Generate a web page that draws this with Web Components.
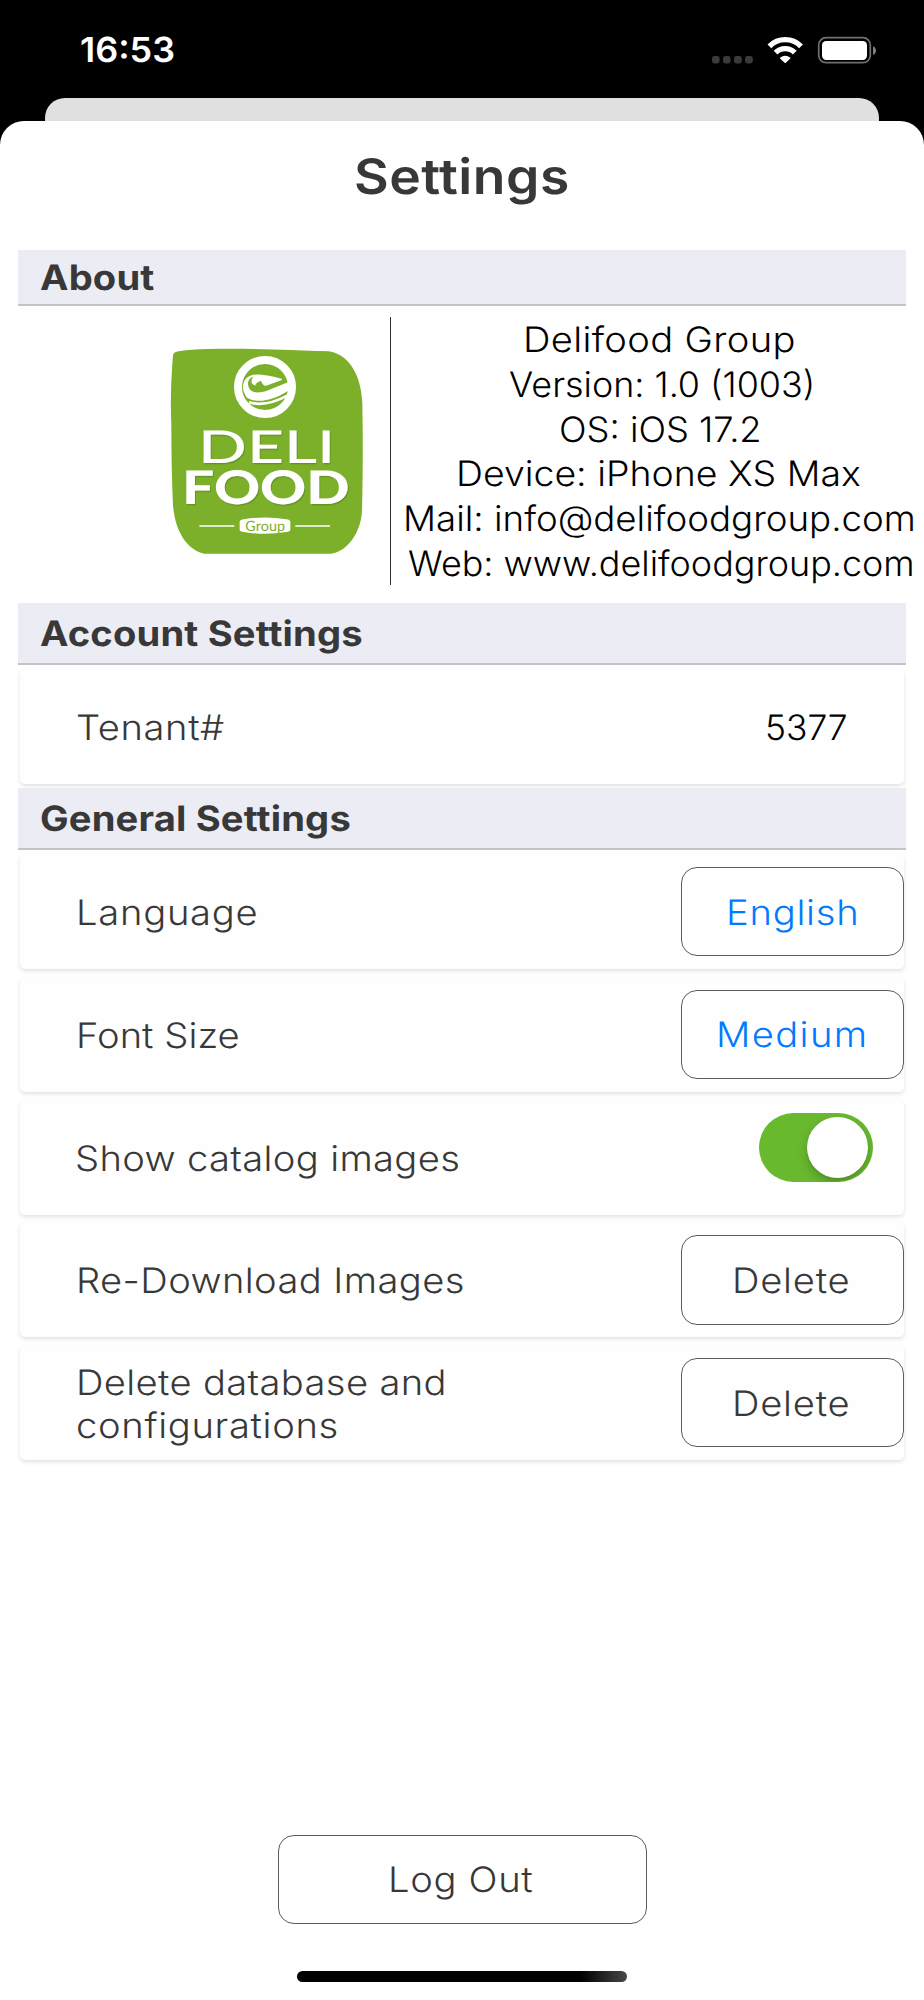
<!DOCTYPE html>
<html lang="en">
<head>
<meta charset="utf-8">
<title>Settings</title>
<style>
html, body { margin: 0; background: #000; }
body { width: 924px; height: 2000px; overflow: hidden; font-family: Inter, sans-serif; text-rendering: geometricPrecision; }
</style>
</head>
<body>
<settings-app></settings-app>
<script>
const define = (name, html, init) => customElements.define(name, class extends HTMLElement {
  connectedCallback() {
    if (this.shadowRoot) return;
    const t = document.createElement('template');
    t.innerHTML = html;
    this.attachShadow({ mode: 'open' }).append(t.content.cloneNode(true));
    if (init) init(this);
  }
});

/* One line of text set to a given ink width: glyphs widen a little, tracking does the rest. */
const pen = document.createElement('canvas').getContext('2d');
define('fit-text', `
<style>
:host { display: block; flex: none; white-space: nowrap; line-height: var(--line, 44px); height: var(--line, 44px); }
span { display: block; transform-origin: 0 50%; text-rendering: geometricPrecision; }
</style><span><slot></slot></span>`, el => {
  const size = el.getAttribute('size') || 35;
  const weight = el.getAttribute('weight') || 300;
  const width = +el.getAttribute('width');
  const text = el.textContent;
  pen.textRendering = 'geometricPrecision';
  pen.font = `${weight} ${size}px Inter`;
  const m = pen.measureText(text);
  const ink = m.actualBoundingBoxLeft + m.actualBoundingBoxRight;
  const k = Math.max(1, Math.min(1.09, width / ink));
  const span = el.shadowRoot.querySelector('span');
  el.style.width = width + 'px';
  span.style.font = `${weight} ${size}px Inter, sans-serif`;
  span.style.lineHeight = 'inherit';
  span.style.letterSpacing = (width / k - ink) / (text.length - 1) + 'px';
  span.style.marginLeft = m.actualBoundingBoxLeft * k + 'px';
  span.style.transform = `translateY(var(--drop, .7px)) scaleX(${k})`;
});

define('status-bar', `
<style>
:host { display: flex; height: 98px; box-sizing: border-box; padding: 28px 48px 0 81px; justify-content: space-between; align-items: flex-start; color: #fff; background: #000; --drop: 1.4px; }
svg { display: block; margin-top: 5px; }
</style>
<fit-text size="34.5" weight="600" width="93">16:53</fit-text>
<svg width="166" height="34" viewBox="710 33 166 34">
  <g fill="#3a3a3a"><rect x="712" y="56" width="7.6" height="7.4" rx="2.4"/><rect x="723" y="56" width="7.6" height="7.4" rx="2.4"/><rect x="734" y="56" width="7.8" height="7.4" rx="2.4"/><rect x="745" y="56" width="7.8" height="7.4" rx="2.4"/></g>
  <g fill="none" stroke="#fff" stroke-width="5.3"><path d="M769.4 46.3A22.2 22.2 0 0 1 801 46.3"/><path d="M775.6 52.7A13.4 13.4 0 0 1 794.8 52.7"/></g>
  <path d="M780 57.8Q785.2 53.8 790.4 57.8Q790.6 58.3 790.1 58.8L785.8 62.8Q785.2 63.3 784.6 62.8L780.3 58.8Q779.8 58.3 780 57.8Z" fill="#fff"/>
  <rect x="818.7" y="37.7" width="51.6" height="25" rx="7.4" fill="none" stroke="#707070" stroke-width="1.7"/>
  <rect x="822" y="41" width="45" height="19" rx="4.2" fill="#fff"/>
  <path d="M873 46.2Q876 47.4 876 50.6T873 55Z" fill="#808080"/>
</svg>`);

define('section-header', `
<style>
:host { display: flex; align-items: center; height: 60px; padding-left: 22.7px; background: #ececf5; border-bottom: 2px solid #c3c3c6; color: #383838; --drop: 1.3px; }
:host([compact]) { height: 54px; }
</style><slot></slot>`);

define('brand-logo', `
<style>:host { display: block; width: 220px; height: 230px; } svg { display: block; }
text { font-family: Lato, "Open Sans", sans-serif; }</style>
<svg width="220" height="230" viewBox="0 0 660 690">
  <defs><filter id="s" x="-5%" y="-10%" width="112%" height="125%"><feDropShadow dx="3" dy="4" stdDeviation="2" flood-color="#4c7d12" flood-opacity=".55"/></filter></defs>
  <path fill="#7db02a" d="M39 61Q41 49 61 48Q90 43 145 42C260 39 380 45 505 49C556 55 603 105 607 205Q610 350 606 530C602 590 565 648 514 656H132C82 645 45 590 39 510Q34 410 34 270Q30 180 37 86Z"/>
  <circle cx="315" cy="156" r="81" fill="none" stroke="#fff" stroke-width="24"/>
  <path fill="#fff" d="M261 188C238 158 250 123 282 119Q307 116 364 131Q371 133 360 137L318 152Q309 153 303 137C289 142 281 152 291 151C270 153 272 132 281 125C261 130 261 150 269 162C278 176 303 175 328 164L384 142Q391 144 388 150L384 168C342 194 295 208 261 188Z"/>
  <path fill="none" stroke="#fff" stroke-width="8" d="M267 202C300 212 339 205 382 182"/>
  <g fill="#fff" filter="url(#s)">
    <text x="114" y="385" font-size="136" font-weight="500" textLength="412" lengthAdjust="spacingAndGlyphs">DELI</text>
    <text x="66" y="508" font-size="139" font-weight="900" textLength="503" lengthAdjust="spacingAndGlyphs">FOOD</text>
  </g>
  <path stroke="#fff" stroke-width="5" d="M118 573H223M406 573H510"/>
  <path fill="#fff" d="M239 560Q240 554 252 553Q315 542 379 553Q390 554 391 560V584Q390 590 379 591Q315 602 252 591Q240 590 239 584Z"/>
  <text x="256" y="587" font-size="43" fill="#7db02a" textLength="119" lengthAdjust="spacingAndGlyphs">Group</text>
</svg>`);

define('about-panel', `
<style>
:host { display: flex; height: 297px; box-sizing: border-box; padding: 11px 0 18px 142px; color: #000; }
brand-logo { margin: 18px 10px 0 0; flex: none; }
.info { border-left: 1.5px solid #2c2c2c; flex: none; width: 538px; display: flex; flex-direction: column; align-items: center; --line: 44.8px; }
</style>
<brand-logo></brand-logo>
<div class="info">
  <fit-text width="268">Delifood Group</fit-text>
  <fit-text width="303">Version: 1.0 (1003)</fit-text>
  <fit-text width="198">OS: iOS 17.2</fit-text>
  <fit-text width="401">Device: iPhone XS Max</fit-text>
  <fit-text width="507">Mail: info@delifoodgroup.com</fit-text>
  <fit-text width="504">Web: www.delifoodgroup.com</fit-text>
</div>`);

define('setting-row', `
<style>
:host { display: flex; justify-content: space-between; align-items: center; height: 115px; box-sizing: border-box; margin: 0 2px; padding-left: 59.2px; border-radius: 5px; background: #fefefe; box-shadow: 0 2px 4px rgba(0,0,0,.12); color: #383838; }
.label { --line: 43px; --drop: 1.5px; }
::slotted([slot=label]) { --line: 43px; --drop: 1.5px; }
</style><div class="label"><slot name="label"></slot></div><slot></slot>`);

define('outline-button', `
<style>
:host { display: flex; align-items: center; justify-content: center; width: 223.5px; height: 89.5px; box-sizing: border-box; border: 1.4px solid #5c5c5c; border-radius: 16px; color: #383838; }
:host([accent]) { color: #007aff; }
</style><slot></slot>`);

define('toggle-switch', `
<style>
:host { display: flex; justify-content: flex-end; align-items: center; width: 114px; height: 69px; box-sizing: border-box; padding-right: 5px; margin: 0 31px 19px 0; border-radius: 35px; background: #69b92f; overflow: hidden; }
i { width: 61px; height: 61px; border-radius: 50%; background: #fff; box-shadow: 0 5px 12px rgba(0,0,0,.2), 0 2px 2px rgba(0,0,0,.08); }
</style><i></i>`);

define('settings-app', `
<style>
:host { display: flex; flex-direction: column; height: 2000px; background: #000; }
.behind { height: 22.5px; margin: 0 45px; background: #e0e0e0; border-radius: 20px 20px 0 0; }
.sheet { flex: 1; display: flex; flex-direction: column; background: #fff; border-radius: 24px 24px 0 0; padding: 0 18px; }
h1 { margin: 0 1px 17.5px 0; height: 112px; display: flex; justify-content: center; align-items: center; color: #383838; --line: 60px; --drop: 0px; }
.list { display: flex; flex-direction: column; gap: 7.75px; padding: 4px 0; }
.footer { margin-top: auto; display: flex; flex-direction: column; align-items: center; gap: 47px; padding-bottom: 18px; }
.footer outline-button { width: 369px; }
.home { width: 330px; height: 11px; border-radius: 6px; background: linear-gradient(90deg, #000 86%, #484848); }
.tenant { margin-right: 58px; color: #000; }
.edge { margin-left: -1px; }
.round { margin-left: -1.7px; }
.bar { margin-left: -2.5px; }
</style>
<status-bar></status-bar>
<div class="behind"></div>
<div class="sheet">
  <h1><fit-text size="49" weight="600" width="211">Settings</fit-text></h1>
  <section-header compact><fit-text class="edge" weight="700" width="114.5">About</fit-text></section-header>
  <about-panel></about-panel>
  <section-header><fit-text class="edge" weight="700" width="322">Account Settings</fit-text></section-header>
  <div class="list">
    <setting-row><fit-text slot="label" class="bar" width="147">Tenant#</fit-text><fit-text class="tenant" width="79">5377</fit-text></setting-row>
  </div>
  <section-header><fit-text weight="700" width="309">General Settings</fit-text></section-header>
  <div class="list">
    <setting-row><fit-text slot="label" width="177">Language</fit-text><outline-button accent><fit-text width="126.5">English</fit-text></outline-button></setting-row>
    <setting-row><fit-text slot="label" width="159">Font Size</fit-text><outline-button accent><fit-text width="145">Medium</fit-text></outline-button></setting-row>
    <setting-row><fit-text slot="label" class="round" width="381.5">Show catalog images</fit-text><toggle-switch></toggle-switch></setting-row>
    <setting-row><fit-text slot="label" width="384">Re-Download Images</fit-text><outline-button><fit-text width="113">Delete</fit-text></outline-button></setting-row>
    <setting-row><fit-text slot="label" width="365">Delete database and</fit-text><fit-text slot="label" class="round" width="260">configurations</fit-text><outline-button><fit-text width="113">Delete</fit-text></outline-button></setting-row>
  </div>
  <div class="footer">
    <outline-button><fit-text width="141">Log Out</fit-text></outline-button>
    <div class="home"></div>
  </div>
</div>`);
</script>
</body>
</html>
